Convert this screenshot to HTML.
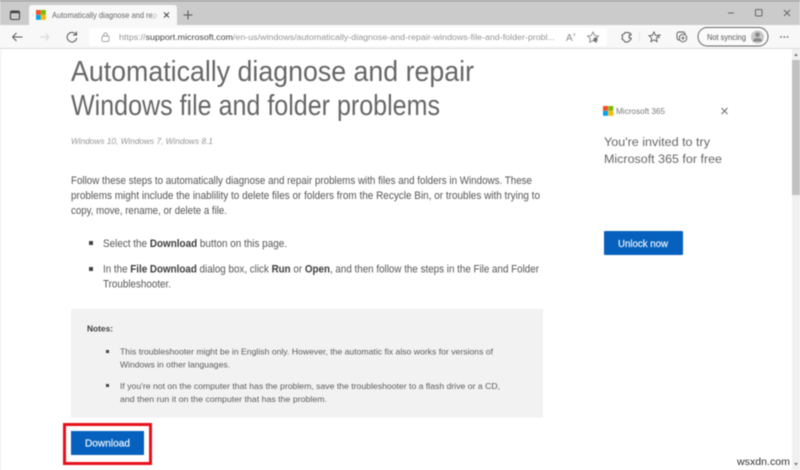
<!DOCTYPE html>
<html><head><meta charset="utf-8"><style>
html,body{margin:0;padding:0;background:#fff;width:800px;height:470px;overflow:hidden}
svg{display:block;filter:blur(.45px)}
text{font-family:"Liberation Sans",sans-serif;fill:#505050}
.b{font-size:10.800px;fill:#555}
.n{font-size:8.500px;fill:#5c5c5c}
.bd{font-weight:bold;fill:#3c3c3c}
</style></head><body>
<svg width="800" height="470" viewBox="0 0 800 470" xmlns="http://www.w3.org/2000/svg">
<rect width="800" height="470" fill="#fff"/>
<!-- chrome -->
<rect width="800" height="25" fill="#cbcbcb"/>
<rect width="800" height="1.500" fill="#9c9c9c"/>
<rect y="25" width="800" height="23" fill="#f8f8f8"/>
<rect y="48" width="800" height="1" fill="#dcdcdc"/>
<path d="M29 25V8q0-3 3-3h142q3 0 3 3v17z" fill="#f8f8f8"/>
<rect x="89" y="28" width="518" height="18" rx="3" fill="#fff"/>
<!-- tab actions -->
<rect x="10.500" y="11" width="9" height="8.500" rx="1.500" fill="none" stroke="#444" stroke-width="1.100"/>
<rect x="10.500" y="11" width="9" height="2.200" fill="#444"/>
<rect x="36" y="10" width="4.800" height="4.800" fill="#f25022"/><rect x="41" y="10" width="4.800" height="4.800" fill="#7fba00"/>
<rect x="36" y="15" width="4.800" height="4.800" fill="#00a4ef"/><rect x="41" y="15" width="4.800" height="4.800" fill="#ffb900"/>
<text x="52" y="18" font-size="8.400" textLength="105" lengthAdjust="spacingAndGlyphs" style="fill:#666">Automatically diagnose and rep</text>
<rect x="152" y="8" width="6" height="14" fill="#f8f8f8" opacity=".6"/>
<path d="M164 12.500l5 5M169 12.500l-5 5" stroke="#444" stroke-width="1" fill="none"/>
<path d="M188 10.500v9M183.500 15h9" stroke="#555" stroke-width="1" fill="none"/>
<!-- nav -->
<path d="M12.500 37h10M12.500 37l4-4M12.500 37l4 4" stroke="#555" stroke-width="1" fill="none"/>
<path d="M40 37h9M49 37l-3.500-3.500M49 37l-3.500 3.500" stroke="#d6d6d6" stroke-width="1" fill="none"/>
<path d="M76 34.500a4.800 4.800 0 1 0 .7 3.500M76.500 31.500v3.500h-3.500" stroke="#555" stroke-width="1" fill="none"/>
<rect x="102" y="36" width="7" height="5.500" rx="1" fill="none" stroke="#888" stroke-width=".7"/>
<path d="M103.700 36v-1.300a1.800 1.800 0 0 1 3.600 0v1.300" fill="none" stroke="#888" stroke-width=".7"/>
<text x="119" y="40" font-size="8.700" style="fill:#959595" textLength="436" lengthAdjust="spacingAndGlyphs">https://<tspan style="fill:#444">support.microsoft.com</tspan>/en-us/windows/automatically-diagnose-and-repair-windows-file-and-folder-probl...</text>
<text x="566" y="41" font-size="10" style="fill:#888">A</text><text x="573" y="36" font-size="5" style="fill:#888">x</text>
<path d="M593 32l1.700 3.500 3.800.5-2.800 2.600.7 3.700-3.400-1.800-3.400 1.800.7-3.700-2.800-2.600 3.800-.5z" fill="none" stroke="#777" stroke-width=".8"/>
<circle cx="595.500" cy="39.500" r="2.200" fill="#777"/>
<path d="M628 32.500h-3l-1 1.500-2 1 .5 2-.5 2 2 1.500 1 1.500h3l1.500-1.500 1.500-1v-1.500h-1.800v-3h1.800v-1l-1.500-1z" fill="none" stroke="#555" stroke-width="1"/>
<rect x="639" y="32" width="1" height="10" fill="#e6e6e6"/>
<path d="M654 32l1.500 3.300 3.500.4-2.600 2.400.7 3.500-3.100-1.700-3.100 1.700.7-3.500-2.600-2.400 3.500-.4z" fill="none" stroke="#555" stroke-width=".9"/>
<path d="M658 35h3M658 37.500h2" stroke="#555" stroke-width=".8"/>
<rect x="677" y="32" width="8" height="8" rx="2" fill="none" stroke="#555" stroke-width=".9"/>
<circle cx="683" cy="38" r="3.800" fill="#f8f8f8" stroke="#555" stroke-width=".9"/>
<path d="M683 36v4M681 38h4" stroke="#555" stroke-width=".8"/>
<rect x="698" y="27.500" width="70" height="18.500" rx="9.200" fill="#fbfbfb" stroke="#666" stroke-width="1"/>
<text x="707" y="40" font-size="7.800" textLength="39" lengthAdjust="spacingAndGlyphs" style="fill:#555">Not syncing</text>
<circle cx="757.500" cy="37" r="6.500" fill="#c8c8c8"/>
<circle cx="757.500" cy="34.800" r="2.300" fill="#888"/><path d="M753 41.500q0-3.500 4.500-3.500t4.500 3.500z" fill="#888"/>
<circle cx="781" cy="37" r=".9" fill="#666"/><circle cx="784.300" cy="37" r=".9" fill="#666"/><circle cx="787.600" cy="37" r=".9" fill="#666"/>
<!-- window -->
<rect x="728" y="12.500" width="6" height="1" fill="#666"/>
<rect x="755.500" y="9.500" width="6.500" height="6.500" rx="1" fill="none" stroke="#666" stroke-width="1"/>
<path d="M784 10l6 6M790 10l-6 6" stroke="#666" stroke-width="1" fill="none"/>
<!-- left page edge + scrollbar -->
<rect x="0" y="49" width="1" height="421" fill="#ececec"/>
<rect x="792" y="49" width="8" height="421" fill="#f0f0f0"/>
<rect x="792" y="60" width="8" height="135" fill="#c1c1c1"/>
<path d="M794 56l2-2.500 2 2.500z" fill="#777"/>
<path d="M794 463l2 2.500 2-2.500z" fill="#777"/>
<!-- title -->
<text x="71" y="81" font-size="29" textLength="403" lengthAdjust="spacingAndGlyphs" style="fill:#666">Automatically diagnose and repair</text>
<text x="71" y="115" font-size="29" textLength="369" lengthAdjust="spacingAndGlyphs" style="fill:#666">Windows file and folder problems</text>
<text x="71" y="144" font-size="8.700" font-style="italic" textLength="142" lengthAdjust="spacingAndGlyphs" style="fill:#959595">Windows 10, Windows 7, Windows 8.1</text>
<!-- paragraph -->
<text class="b" x="71" y="184" textLength="461" lengthAdjust="spacingAndGlyphs">Follow these steps to automatically diagnose and repair problems with files and folders in Windows. These</text>
<text class="b" x="71" y="199" textLength="469" lengthAdjust="spacingAndGlyphs">problems might include the inablility to delete files or folders from the Recycle Bin, or troubles with trying to</text>
<text class="b" x="71" y="214" textLength="156" lengthAdjust="spacingAndGlyphs">copy, move, rename, or delete a file.</text>
<rect x="89" y="241" width="4" height="4" fill="#444"/>
<text class="b" x="103" y="247" textLength="184" lengthAdjust="spacingAndGlyphs">Select the <tspan class="bd">Download</tspan> button on this page.</text>
<rect x="89" y="267" width="4" height="4" fill="#444"/>
<text class="b" x="103" y="272.500" textLength="436" lengthAdjust="spacingAndGlyphs">In the <tspan class="bd">File Download</tspan> dialog box, click <tspan class="bd">Run</tspan> or <tspan class="bd">Open</tspan>, and then follow the steps in the File and Folder</text>
<text class="b" x="103" y="287.500" textLength="68" lengthAdjust="spacingAndGlyphs">Troubleshooter.</text>
<!-- notes -->
<rect x="71" y="309" width="472" height="108.500" fill="#f2f2f2"/>
<text class="n bd" x="87" y="331.500" textLength="26" lengthAdjust="spacingAndGlyphs">Notes:</text>
<rect x="106" y="350" width="3" height="3" fill="#444"/>
<text class="n" x="120" y="354.500" textLength="373" lengthAdjust="spacingAndGlyphs">This troubleshooter might be in English only. However, the automatic fix also works for versions of</text>
<text class="n" x="120" y="367.500" textLength="110" lengthAdjust="spacingAndGlyphs">Windows in other languages.</text>
<rect x="106" y="384" width="3" height="3" fill="#444"/>
<text class="n" x="120" y="389" textLength="380" lengthAdjust="spacingAndGlyphs">If you're not on the computer that has the problem, save the troubleshooter to a flash drive or a CD,</text>
<text class="n" x="120" y="402" textLength="207" lengthAdjust="spacingAndGlyphs">and then run it on the computer that has the problem.</text>
<!-- download -->
<rect x="64.500" y="424.500" width="86" height="39" fill="none" stroke="#e8101a" stroke-width="3"/>
<rect x="71" y="431" width="73" height="24" fill="#0561bd"/>
<text x="85" y="446.500" font-size="10.500" textLength="45" lengthAdjust="spacingAndGlyphs" style="fill:#eef4fb;stroke:#eef4fb;stroke-width:.2">Download</text>
<!-- ad -->
<rect x="603" y="106" width="5" height="4.800" fill="#f25022"/><rect x="608.300" y="106" width="5" height="4.800" fill="#7fba00"/>
<rect x="603" y="111" width="5" height="4.800" fill="#00a4ef"/><rect x="608.300" y="111" width="5" height="4.800" fill="#ffb900"/>
<text x="616" y="114" font-size="8.600" textLength="49" lengthAdjust="spacingAndGlyphs" style="fill:#777">Microsoft 365</text>
<path d="M721.500 108l6 6M727.500 108l-6 6" stroke="#666" stroke-width=".9" fill="none"/>
<text x="604" y="146" font-size="12.300" textLength="106" lengthAdjust="spacingAndGlyphs" style="fill:#666">You're invited to try</text>
<text x="604" y="163" font-size="12.300" textLength="118" lengthAdjust="spacingAndGlyphs" style="fill:#666">Microsoft 365 for free</text>
<rect x="604" y="231" width="79" height="24" rx="1" fill="#0561bd"/>
<text x="618" y="247" font-size="10" textLength="50" lengthAdjust="spacingAndGlyphs" style="fill:#eef4fb;stroke:#eef4fb;stroke-width:.2">Unlock now</text>
<!-- watermark -->
<text x="737" y="465" font-size="10.500" textLength="53" lengthAdjust="spacingAndGlyphs" style="fill:#333">wsxdn.com</text>
</svg>
</body></html>
